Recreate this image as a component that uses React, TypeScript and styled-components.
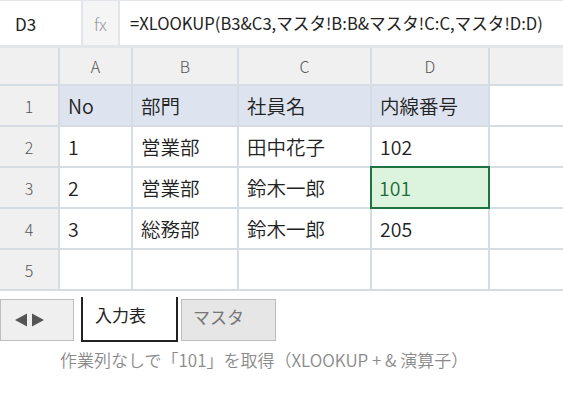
import React from 'react'
import styled, { createGlobalStyle } from 'styled-components'

const GlobalStyle = createGlobalStyle`
  html, body {
    margin: 0;
    padding: 0;
    background: #ffffff;
  }
  body {
    font-family: 'Noto Sans CJK JP', sans-serif;
    color: #222222;
  }
`

const Page = styled.div`
  width: 563px;
  height: 416px;
  background: #ffffff;
  overflow: hidden;
`

const FormulaBar = styled.div`
  display: flex;
  gap: 2px;
  padding: 1px 0 3px;
  background: #e2e6ea;
`

const NameBox = styled.div`
  width: 81px;
  height: 44px;
  box-sizing: border-box;
  padding-left: 15px;
  display: flex;
  align-items: center;
  background: #ffffff;
  font-size: 17px;
  color: #222;
`

const FxBox = styled.div`
  width: 35px;
  height: 44px;
  display: flex;
  align-items: center;
  justify-content: center;
  background: #f5f5f5;
  font-size: 17px;
  font-weight: 300;
  color: #9a9a9a;
`

const FormulaText = styled.div`
  flex: 1;
  height: 44px;
  box-sizing: border-box;
  padding-left: 10px;
  display: flex;
  align-items: center;
  background: #ffffff;
  font-size: 16.6px;
  color: #222;
  white-space: nowrap;
`

const Sheet = styled.div`
  display: grid;
  grid-template-columns: 58px 71px 104px 131px 116px 1fr;
  grid-template-rows: 36px repeat(5, 39px);
  gap: 2px;
  padding-bottom: 2px;
  background: #d6dce3;
`

const ColHead = styled.div`
  background: #f0f0f0;
  display: flex;
  align-items: center;
  justify-content: center;
  font-size: 16px;
  font-weight: 300;
  color: #555;
`

const RowHead = styled.div`
  background: #f0f0f0;
  display: flex;
  align-items: center;
  justify-content: center;
  font-size: 16px;
  font-weight: 300;
  color: #555;
`

const Cell = styled.div<{ $head?: boolean; $selected?: boolean }>`
  box-sizing: border-box;
  display: flex;
  align-items: center;
  padding-left: ${(p) => (p.$selected ? '7px' : '8px')};
  background: ${(p) => (p.$selected ? '#dcf4de' : p.$head ? '#dde4ef' : '#ffffff')};
  color: ${(p) => (p.$selected ? '#1d6a37' : '#222222')};
  font-size: 19.5px;
  font-weight: 350;
  white-space: nowrap;
  ${(p) =>
    p.$selected &&
    `
    margin: -2px;
    border: 2px solid #1f7340;
    position: relative;
  `}
`

const TabBar = styled.div`
  display: flex;
  align-items: flex-start;
  padding-top: 6px;
`

const NavBox = styled.div`
  width: 74px;
  height: 42px;
  margin-top: 2px;
  box-sizing: border-box;
  border: 1px solid #bdbdbd;
  background: #efefef;
  display: flex;
  align-items: center;
  padding-left: 14px;
`

const Tab = styled.div<{ $active?: boolean }>`
  box-sizing: border-box;
  width: ${(p) => (p.$active ? '97px' : '95px')};
  height: ${(p) => (p.$active ? '45px' : '42px')};
  margin-top: ${(p) => (p.$active ? '0' : '2px')};
  margin-left: ${(p) => (p.$active ? '7px' : '3px')};
  padding: ${(p) => (p.$active ? '5px 0 0 12px' : '4px 0 0 11px')};
  background: ${(p) => (p.$active ? '#ffffff' : '#e6e6e6')};
  border: ${(p) => (p.$active ? '2px solid #222' : '1px solid #bdbdbd')};
  border-top: ${(p) => (p.$active ? 'none' : '1px solid #bdbdbd')};
  font-size: 17px;
  line-height: 26px;
  color: ${(p) => (p.$active ? '#222' : '#777')};
`

const Caption = styled.div`
  margin-top: 6px;
  padding-left: 60px;
  font-size: 17px;
  font-weight: 350;
  line-height: 24px;
  color: #8a8a8a;
  white-space: nowrap;
`

const rows: string[][] = [
  ['No', '部門', '社員名', '内線番号'],
  ['1', '営業部', '田中花子', '102'],
  ['2', '営業部', '鈴木一郎', '101'],
  ['3', '総務部', '鈴木一郎', '205'],
  ['', '', '', ''],
]

const NavArrows = () => (
  <svg width="30" height="14" viewBox="0 0 30 14">
    <polygon points="0,7 12,0.5 12,13.5" fill="#555" />
    <polygon points="29,7 17,0.5 17,13.5" fill="#555" />
  </svg>
)

const App = () => {
  return (
    <Page>
      <GlobalStyle />
      <FormulaBar>
        <NameBox>D3</NameBox>
        <FxBox>fx</FxBox>
        <FormulaText>=XLOOKUP(B3&amp;C3,マスタ!B:B&amp;マスタ!C:C,マスタ!D:D)</FormulaText>
      </FormulaBar>
      <Sheet>
        <ColHead />
        <ColHead>A</ColHead>
        <ColHead>B</ColHead>
        <ColHead>C</ColHead>
        <ColHead>D</ColHead>
        <ColHead />
        {rows.map((row, r) => (
          <React.Fragment key={r}>
            <RowHead>{r + 1}</RowHead>
            {row.map((value, c) => (
              <Cell key={c} $head={r === 0} $selected={r === 2 && c === 3}>
                {value}
              </Cell>
            ))}
            <Cell />
          </React.Fragment>
        ))}
      </Sheet>
      <TabBar>
        <NavBox>
          <NavArrows />
        </NavBox>
        <Tab $active>入力表</Tab>
        <Tab>マスタ</Tab>
      </TabBar>
      <Caption>作業列なしで「101」を取得（XLOOKUP + &amp; 演算子）</Caption>
    </Page>
  )
}

export default App
